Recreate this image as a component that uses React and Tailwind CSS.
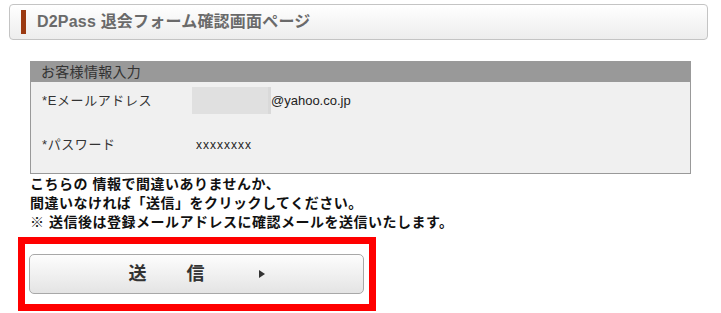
import React from 'react';

const jp = { fontFamily: '"Liberation Sans", "Noto Sans CJK JP", sans-serif' };

export default function App() {
  return (
    <div className="w-[721px] h-[313px] bg-white overflow-hidden" style={jp}>
      <div className="pt-[4px] pl-[9px] pr-[13px]">
        <div className="h-[36px] flex items-center rounded-[4px] border border-[#c4c4c4] bg-gradient-to-b from-[#ffffff] to-[#ededed] pl-[11px]">
          <div className="w-[5px] h-[24px] bg-[#9b3a12]" />
          <h1 className="ml-[11px] text-[16px] font-bold text-[#6a6a6a] leading-none tracking-[0.2px]">
            D2Pass 退会フォーム確認画面ページ
          </h1>
        </div>
      </div>

      <div className="mt-[21px] ml-[30px] w-[661px]">
        <div className="h-[21px] bg-[#999999] flex items-center pl-[11px] text-[14px] text-[#333333] leading-none tracking-[0.3px]">
          お客様情報入力
        </div>
        <div className="h-[92px] bg-[#f0f0f0] border-x border-b border-[#999999] pt-[5px] pl-[11px]">
          <div className="flex items-center h-[27px]">
            <div className="w-[150px] text-[13px] text-[#333333] tracking-[0.6px]">*Eメールアドレス</div>
            <div className="w-[79px] h-[27px] bg-[#e0e0e0] border-r-[3px] border-[#d9d9d9]" />
            <div className="text-[13px] text-[#222222]">@yahoo.co.jp</div>
          </div>
          <div className="flex items-center h-[27px] mt-[17px]">
            <div className="w-[150px] text-[13px] text-[#333333] tracking-[0.6px]">*パスワード</div>
            <div className="pl-[4px] text-[12px] tracking-[1px] text-[#222222]">xxxxxxxx</div>
          </div>
        </div>
      </div>

      <div className="ml-[30px] pt-[1px] text-[14px] font-bold leading-[19px] tracking-[0.5px] text-[#111111]">
        <p>こちらの 情報で間違いありませんか、</p>
        <p>間違いなければ「送信」をクリックしてください。</p>
        <p>※ 送信後は登録メールアドレスに確認メールを送信いたします。</p>
      </div>

      <div className="mt-[5px] ml-[18px] w-[358px] border-[7px] border-[#ff0000] pt-[10px] pb-[10px] pl-[4px] pr-[5px]">
        <button className="w-full h-[40px] rounded-[5px] border border-[#a8a8a8] bg-gradient-to-b from-[#fdfdfd] to-[#e4e4e4] flex items-center justify-center text-[18px] font-bold text-[#333333] leading-none">
          <span>送</span>
          <span className="ml-[40px]">信</span>
          <svg className="ml-[54px]" width="6" height="8" viewBox="0 0 6 8">
            <path d="M0 0 L6 4 L0 8 Z" fill="#333333" />
          </svg>
        </button>
      </div>
    </div>
  );
}
